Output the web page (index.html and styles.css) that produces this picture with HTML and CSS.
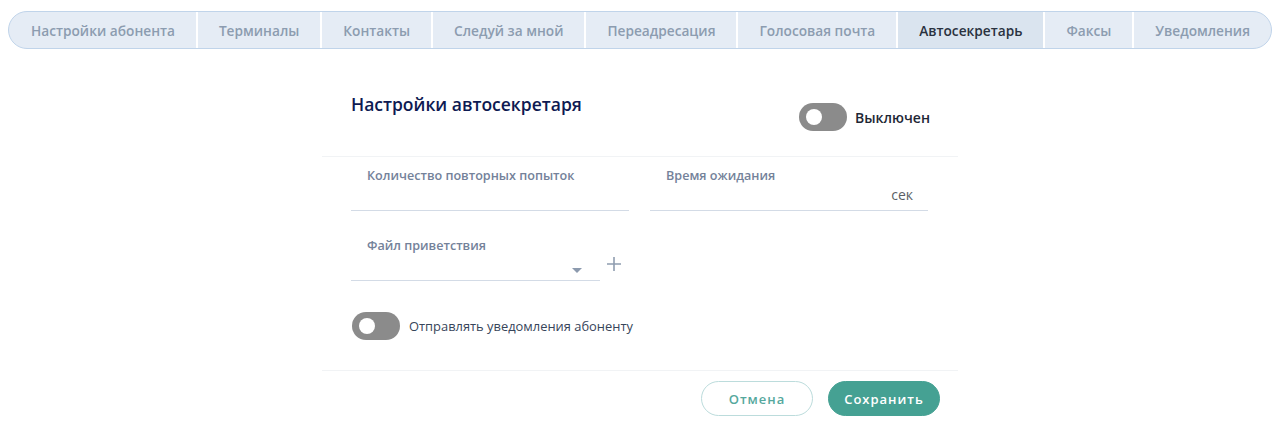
FILE: index.html
```html
<!DOCTYPE html>
<html lang="ru">
<head>
<meta charset="utf-8">
<title>Автосекретарь</title>
<link rel="stylesheet" href="styles.css">
</head>
<body>
<nav class="tabs">
  <div class="tab">Настройки абонента</div>
  <div class="tab">Терминалы</div>
  <div class="tab">Контакты</div>
  <div class="tab">Следуй за мной</div>
  <div class="tab">Переадресация</div>
  <div class="tab">Голосовая почта</div>
  <div class="tab active">Автосекретарь</div>
  <div class="tab">Факсы</div>
  <div class="tab">Уведомления</div>
</nav>

<section class="card">
  <header class="card-head">
    <h2 class="title">Настройки автосекретаря</h2>
    <div class="switch-row">
      <span class="switch"><span class="knob"></span></span>
      <span class="switch-label">Выключен</span>
    </div>
  </header>

  <div class="card-body">
    <div class="row">
      <div class="field">
        <div class="label">Количество повторных попыток</div>
        <div class="input"></div>
      </div>
      <div class="field">
        <div class="label">Время ожидания</div>
        <div class="input"><span class="suffix">сек</span></div>
      </div>
    </div>

    <div class="row row-file">
      <div class="field field-file">
        <div class="label">Файл приветствия</div>
        <div class="input">
          <svg class="caret" width="10" height="5" viewBox="0 0 10 5"><path d="M0 0h10L5 5z" fill="#8c9aae"/></svg>
        </div>
      </div>
      <svg class="plus" width="14" height="14" viewBox="0 0 14 14"><path d="M7 0v14M0 7h14" stroke="#8f9db0" stroke-width="1.6"/></svg>
    </div>

    <div class="notify">
      <span class="switch"><span class="knob"></span></span>
      <span class="notify-label">Отправлять уведомления абоненту</span>
    </div>
  </div>

  <footer class="card-foot">
    <button class="btn btn-cancel">Отмена</button>
    <button class="btn btn-save">Сохранить</button>
  </footer>
</section>
</body>
</html>
```

FILE: styles.css
```css
* { box-sizing: border-box; }

body {
  margin: 0;
  padding: 11px 8px 0 8px;
  background: #ffffff;
  font-family: "Open Sans", "Noto Sans", sans-serif;
}

.tabs {
  display: flex;
  height: 38px;
  border: 1px solid #c0d4ea;
  border-radius: 19px;
  background: #e5ecf5;
  overflow: hidden;
}

.tab {
  flex: 1 1 auto;
  min-width: 0;
  display: flex;
  align-items: center;
  justify-content: center;
  padding: 0 21px;
  font-size: 13.7px;
  font-weight: 600;
  color: #8c9cb0;
  white-space: nowrap;
  border-left: 2px solid #ffffff;
}

.tab:first-child { border-left: none; padding-left: 22px; }

.tab.active {
  background: #dae4ef;
  color: #2a3240;
}

.card {
  width: 636px;
  margin: 0 auto;
}

.card-head {
  display: flex;
  justify-content: space-between;
  align-items: flex-start;
  padding: 43px 28px 25px 29px;
  border-bottom: 1px solid #f1f3f5;
}

.title {
  margin: 0;
  font-size: 17.5px;
  line-height: 24px;
  font-weight: 600;
  color: #0e1a52;
}

.switch-row {
  display: flex;
  align-items: center;
  gap: 8px;
  margin-top: 11px;
}

.switch {
  display: flex;
  align-items: center;
  width: 48px;
  height: 28px;
  border-radius: 14px;
  background: #8b8b8b;
  padding-left: 7px;
  flex: none;
}

.knob {
  width: 16px;
  height: 16px;
  border-radius: 50%;
  background: #ffffff;
}

.switch-label {
  font-size: 14px;
  font-weight: 600;
  color: #1e2735;
}

.card-body {
  padding: 10px 30px 30px 29px;
  border-bottom: 1px solid #f1f3f5;
}

.row {
  display: flex;
  gap: 21px;
}

.row-file {
  margin-top: 26px;
  align-items: flex-end;
  gap: 0;
}

.field {
  flex: 1 1 0;
}

.field-file {
  flex: none;
  width: 249px;
}

.label {
  padding-left: 16px;
  font-size: 12.6px;
  line-height: 18px;
  font-weight: 600;
  color: #74829a;
}

.input {
  display: flex;
  align-items: center;
  justify-content: flex-end;
  height: 26px;
  border-bottom: 1px solid #d3dbe6;
  padding-right: 15px;
}

.suffix {
  font-size: 14px;
  color: #5a5f66;
  margin-top: -6px;
}

.caret {
  margin-right: 3px;
  margin-top: 6px;
}

.plus {
  margin-left: 7px;
  margin-bottom: 10px;
}

.notify {
  display: flex;
  align-items: center;
  gap: 9px;
  margin-top: 31px;
  margin-left: 1px;
}

.notify-label {
  font-size: 12.9px;
  color: #37455a;
}

.card-foot {
  display: flex;
  justify-content: flex-end;
  gap: 15px;
  padding: 10px 18px 0 0;
}

.btn {
  width: 112px;
  height: 35px;
  border-radius: 18px;
  font-family: "Open Sans", "Noto Sans", sans-serif;
  font-size: 13px;
  font-weight: 600;
  letter-spacing: 1px;
  cursor: pointer;
}

.btn-cancel {
  background: #ffffff;
  border: 1px solid #bcdcdc;
  color: #55a89d;
}

.btn-save {
  background: #45a193;
  border: 1px solid #45a193;
  color: #ffffff;
}
```
